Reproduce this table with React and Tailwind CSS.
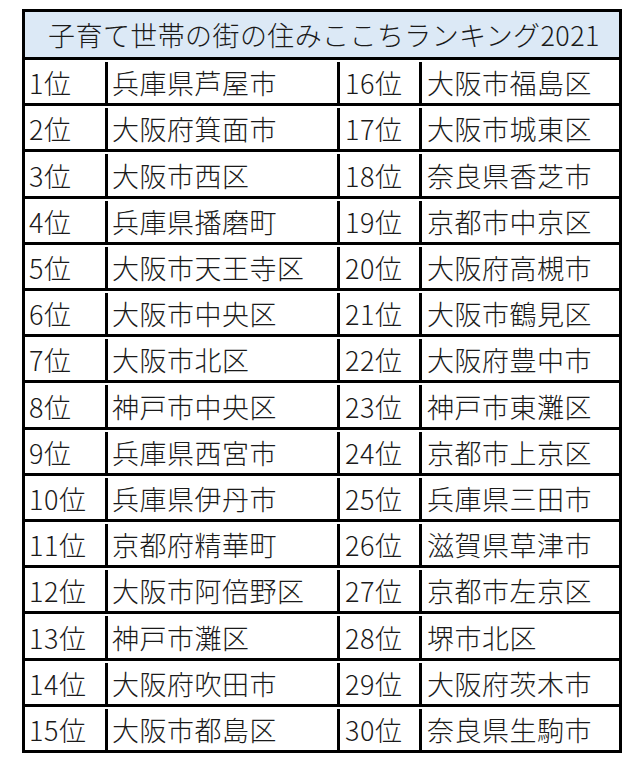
import React from 'react';

const left = [
  ['1位', '兵庫県芦屋市'],
  ['2位', '大阪府箕面市'],
  ['3位', '大阪市西区'],
  ['4位', '兵庫県播磨町'],
  ['5位', '大阪市天王寺区'],
  ['6位', '大阪市中央区'],
  ['7位', '大阪市北区'],
  ['8位', '神戸市中央区'],
  ['9位', '兵庫県西宮市'],
  ['10位', '兵庫県伊丹市'],
  ['11位', '京都府精華町'],
  ['12位', '大阪市阿倍野区'],
  ['13位', '神戸市灘区'],
  ['14位', '大阪府吹田市'],
  ['15位', '大阪市都島区'],
];

const right = [
  ['16位', '大阪市福島区'],
  ['17位', '大阪市城東区'],
  ['18位', '奈良県香芝市'],
  ['19位', '京都市中京区'],
  ['20位', '大阪府高槻市'],
  ['21位', '大阪市鶴見区'],
  ['22位', '大阪府豊中市'],
  ['23位', '神戸市東灘区'],
  ['24位', '京都市上京区'],
  ['25位', '兵庫県三田市'],
  ['26位', '滋賀県草津市'],
  ['27位', '京都市左京区'],
  ['28位', '堺市北区'],
  ['29位', '大阪府茨木市'],
  ['30位', '奈良県生駒市'],
];

const cell = 'flex items-center border-r-[3px] border-black pl-[4px] whitespace-nowrap';

export default function App() {
  return (
    <div
      className="w-[640px] h-[760px] bg-white pt-[9px] pl-[22px] text-[#1a1a1a] font-light"
      style={{ fontFamily: '"Noto Sans CJK JP", "Noto Sans", sans-serif' }}
    >
      <div className="w-[600px] h-[744px] border-[3px] border-black flex flex-col">
        {/* 見出し */}
        <div className="h-[48px] shrink-0 border-b-[3px] border-black bg-[#dce9f6] flex items-center justify-center text-[27px] tracking-[0.4px] leading-none pl-[4px]">
          子育て世帯の街の住みここちランキング2021
        </div>

        <div className="flex-1 flex flex-col">
          {left.map((row, i) => (
            <div
              key={row[0]}
              className={`flex-1 grid grid-cols-[83px_232px_82px_197px] text-[27px] tracking-[0.5px] leading-none pt-[2px] ${
                i < left.length - 1 ? 'border-b-[3px] border-black' : ''
              }`}
            >
              <div className={cell}>{row[0]}</div>
              <div className={cell}>{row[1]}</div>
              <div className={`${cell} pl-[5px]`}>{right[i][0]}</div>
              <div className="flex items-center pl-[5px] whitespace-nowrap">{right[i][1]}</div>
            </div>
          ))}
        </div>
      </div>
    </div>
  );
}
